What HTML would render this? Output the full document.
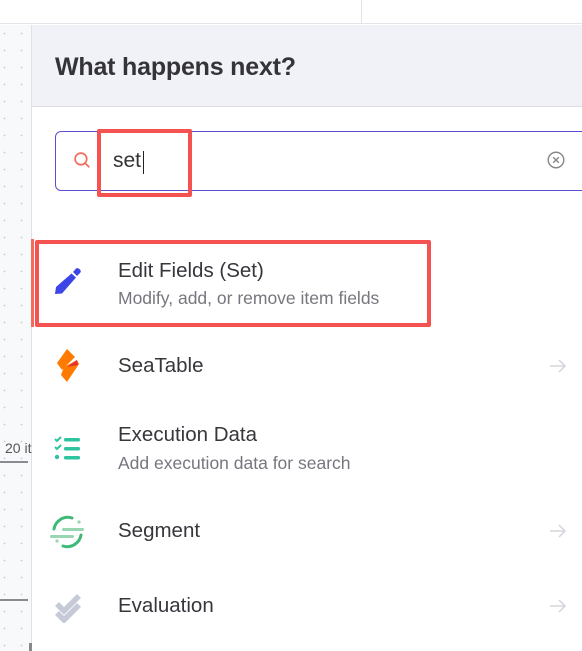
<!DOCTYPE html>
<html><head><style>
*{margin:0;padding:0;box-sizing:border-box}
body{width:582px;height:651px;overflow:hidden;position:relative;background:#fff;font-family:"Liberation Sans",sans-serif;color:#2d2d33}
.top{position:absolute;left:0;top:0;width:582px;height:24px;background:#fff;border-bottom:1px solid #e3e4ea}
.vd{position:absolute;left:361px;top:0;width:1px;height:24px;background:#e3e4ea}
.canvas{position:absolute;left:0;top:25px;width:32px;height:626px;background-color:#f8f9fb;background-image:radial-gradient(circle,#c9cbd2 0.7px,transparent 1px);background-size:17px 17px;background-position:-4px 0;border-right:1px solid #e0e1e6}
.hdr{position:absolute;left:32px;top:25px;width:550px;height:82px;background:#f1f2f7;border-bottom:1px solid #dcdde4}
.hdr h1{position:absolute;left:23px;top:28px;font-size:25px;font-weight:bold;color:#333338;letter-spacing:-0.2px}
.search{position:absolute;left:55px;top:131px;width:540px;height:60px;border:1.5px solid #5b4fd0;border-radius:6px;background:#fff}
.hl{position:absolute;border:4px solid #f55252;border-radius:2px}
.t{position:absolute;left:118px;font-size:20.5px;color:#36363c}
.s{position:absolute;left:118px;font-size:17.5px;color:#76767e}
.arr{position:absolute;left:548px}
</style></head><body>
<div class="top"><div class="vd"></div></div>
<div class="canvas"></div>
<div style="position:absolute;left:5px;top:440px;font-size:14px;color:#555">20 it</div>
<div style="position:absolute;left:0;top:461px;width:28px;height:2px;background:#8a8b90"></div>
<div style="position:absolute;left:0;top:599px;width:28px;height:2px;background:#8a8b90"></div>
<div style="position:absolute;left:29px;top:643px;width:3px;height:8px;background:#888"></div>
<div class="hdr"><h1>What happens next?</h1></div>
<div class="search"></div>
<svg style="position:absolute;left:73px;top:151px" width="19" height="19" viewBox="0 0 18 18"><circle cx="7.5" cy="7.5" r="5.5" fill="none" stroke="#f26b5b" stroke-width="1.6"/><path d="M11.5 11.5L15 15" stroke="#f26b5b" stroke-width="1.6" stroke-linecap="round"/></svg>
<div style="position:absolute;left:113px;top:149px;font-size:21px;color:#333">set</div>
<div style="position:absolute;left:143px;top:151px;width:1px;height:23px;background:#222"></div>
<svg style="position:absolute;left:546px;top:150px" width="20" height="20" viewBox="0 0 18 18"><circle cx="9" cy="9" r="7" fill="none" stroke="#888" stroke-width="1.3"/><path d="M6.5 6.5l5 5M11.5 6.5l-5 5" stroke="#888" stroke-width="1.3"/></svg>
<div class="hl" style="left:97px;top:129px;width:95px;height:68px"></div>
<div style="position:absolute;left:31px;top:239px;width:3px;height:88px;background:#f26b5b"></div>
<div class="hl" style="left:35px;top:240px;width:396px;height:87px"></div>
<svg style="position:absolute;left:52px;top:266px" width="30" height="32" viewBox="0 0 30 32"><path d="M21 6l3-3.5q2-1 4 1 1.5 2 0 3.5L25 10z" fill="#3c45e6"/><path d="M19.5 7.5l4.5 4L10 27.5 3 28l1-7z" fill="#3c45e6"/></svg>
<div class="t" style="top:259px">Edit Fields (Set)</div>
<div class="s" style="top:288px">Modify, add, or remove item fields</div>
<svg style="position:absolute;left:55px;top:349px" width="24" height="34" viewBox="0 0 24 34"><path d="M12 0L20 8 7 21 2 14z" fill="#ff7a00"/><path d="M9 18L22 11l2 4-12 18-6-7z" fill="#ff7a00"/><path d="M12 18l10-7 1 5z" fill="#e8302f"/></svg>
<div class="t" style="top:354px">SeaTable</div>
<svg class="arr" style="top:357px" width="20" height="18" viewBox="0 0 20 18"><path d="M2 9h15M11 3l6 6-6 6" fill="none" stroke="#d3d5dc" stroke-width="1.5"/></svg>
<svg style="position:absolute;left:53px;top:435px" width="30" height="28" viewBox="0 0 30 28"><path d="M2 4l2 2 4-4M2 12l2 2 4-4" fill="none" stroke="#2ec4a0" stroke-width="2"/><circle cx="4" cy="22" r="2.2" fill="#2ec4a0"/><rect x="11" y="3" width="16" height="3.5" rx="1.5" fill="#2ec4a0"/><rect x="11" y="12" width="16" height="3.5" rx="1.5" fill="#2ec4a0"/><rect x="11" y="21" width="16" height="3.5" rx="1.5" fill="#2ec4a0"/></svg>
<div class="t" style="top:423px">Execution Data</div>
<div class="s" style="top:453px">Add execution data for search</div>
<svg style="position:absolute;left:50px;top:512px" width="36" height="40" viewBox="0 0 36 40"><path d="M4 17A14 14 0 0 1 22 6" fill="none" stroke="#3dba77" stroke-width="3" stroke-linecap="round"/><path d="M31 23A14 14 0 0 1 13 34" fill="none" stroke="#3dba77" stroke-width="3" stroke-linecap="round"/><rect x="12" y="16" width="22" height="3" rx="1.5" fill="#98d6b1"/><rect x="0" y="23" width="24" height="3" rx="1.5" fill="#98d6b1"/><circle cx="29" cy="10" r="1.6" fill="#98d6b1"/><circle cx="7" cy="29" r="1.6" fill="#98d6b1"/></svg>
<div class="t" style="top:519px">Segment</div>
<svg class="arr" style="top:522px" width="20" height="18" viewBox="0 0 20 18"><path d="M2 9h15M11 3l6 6-6 6" fill="none" stroke="#d3d5dc" stroke-width="1.5"/></svg>
<svg style="position:absolute;left:52px;top:589px" width="32" height="34" viewBox="0 0 32 34"><path d="M5 15l7 7L27 7" fill="none" stroke="#c6cad6" stroke-width="5.5" stroke-linejoin="miter"/><path d="M5 24l7 7L27 16" fill="none" stroke="#c6cad6" stroke-width="5.5" stroke-linejoin="miter"/></svg>
<div class="t" style="top:594px">Evaluation</div>
<svg class="arr" style="top:597px" width="20" height="18" viewBox="0 0 20 18"><path d="M2 9h15M11 3l6 6-6 6" fill="none" stroke="#d3d5dc" stroke-width="1.5"/></svg>
</body></html>
